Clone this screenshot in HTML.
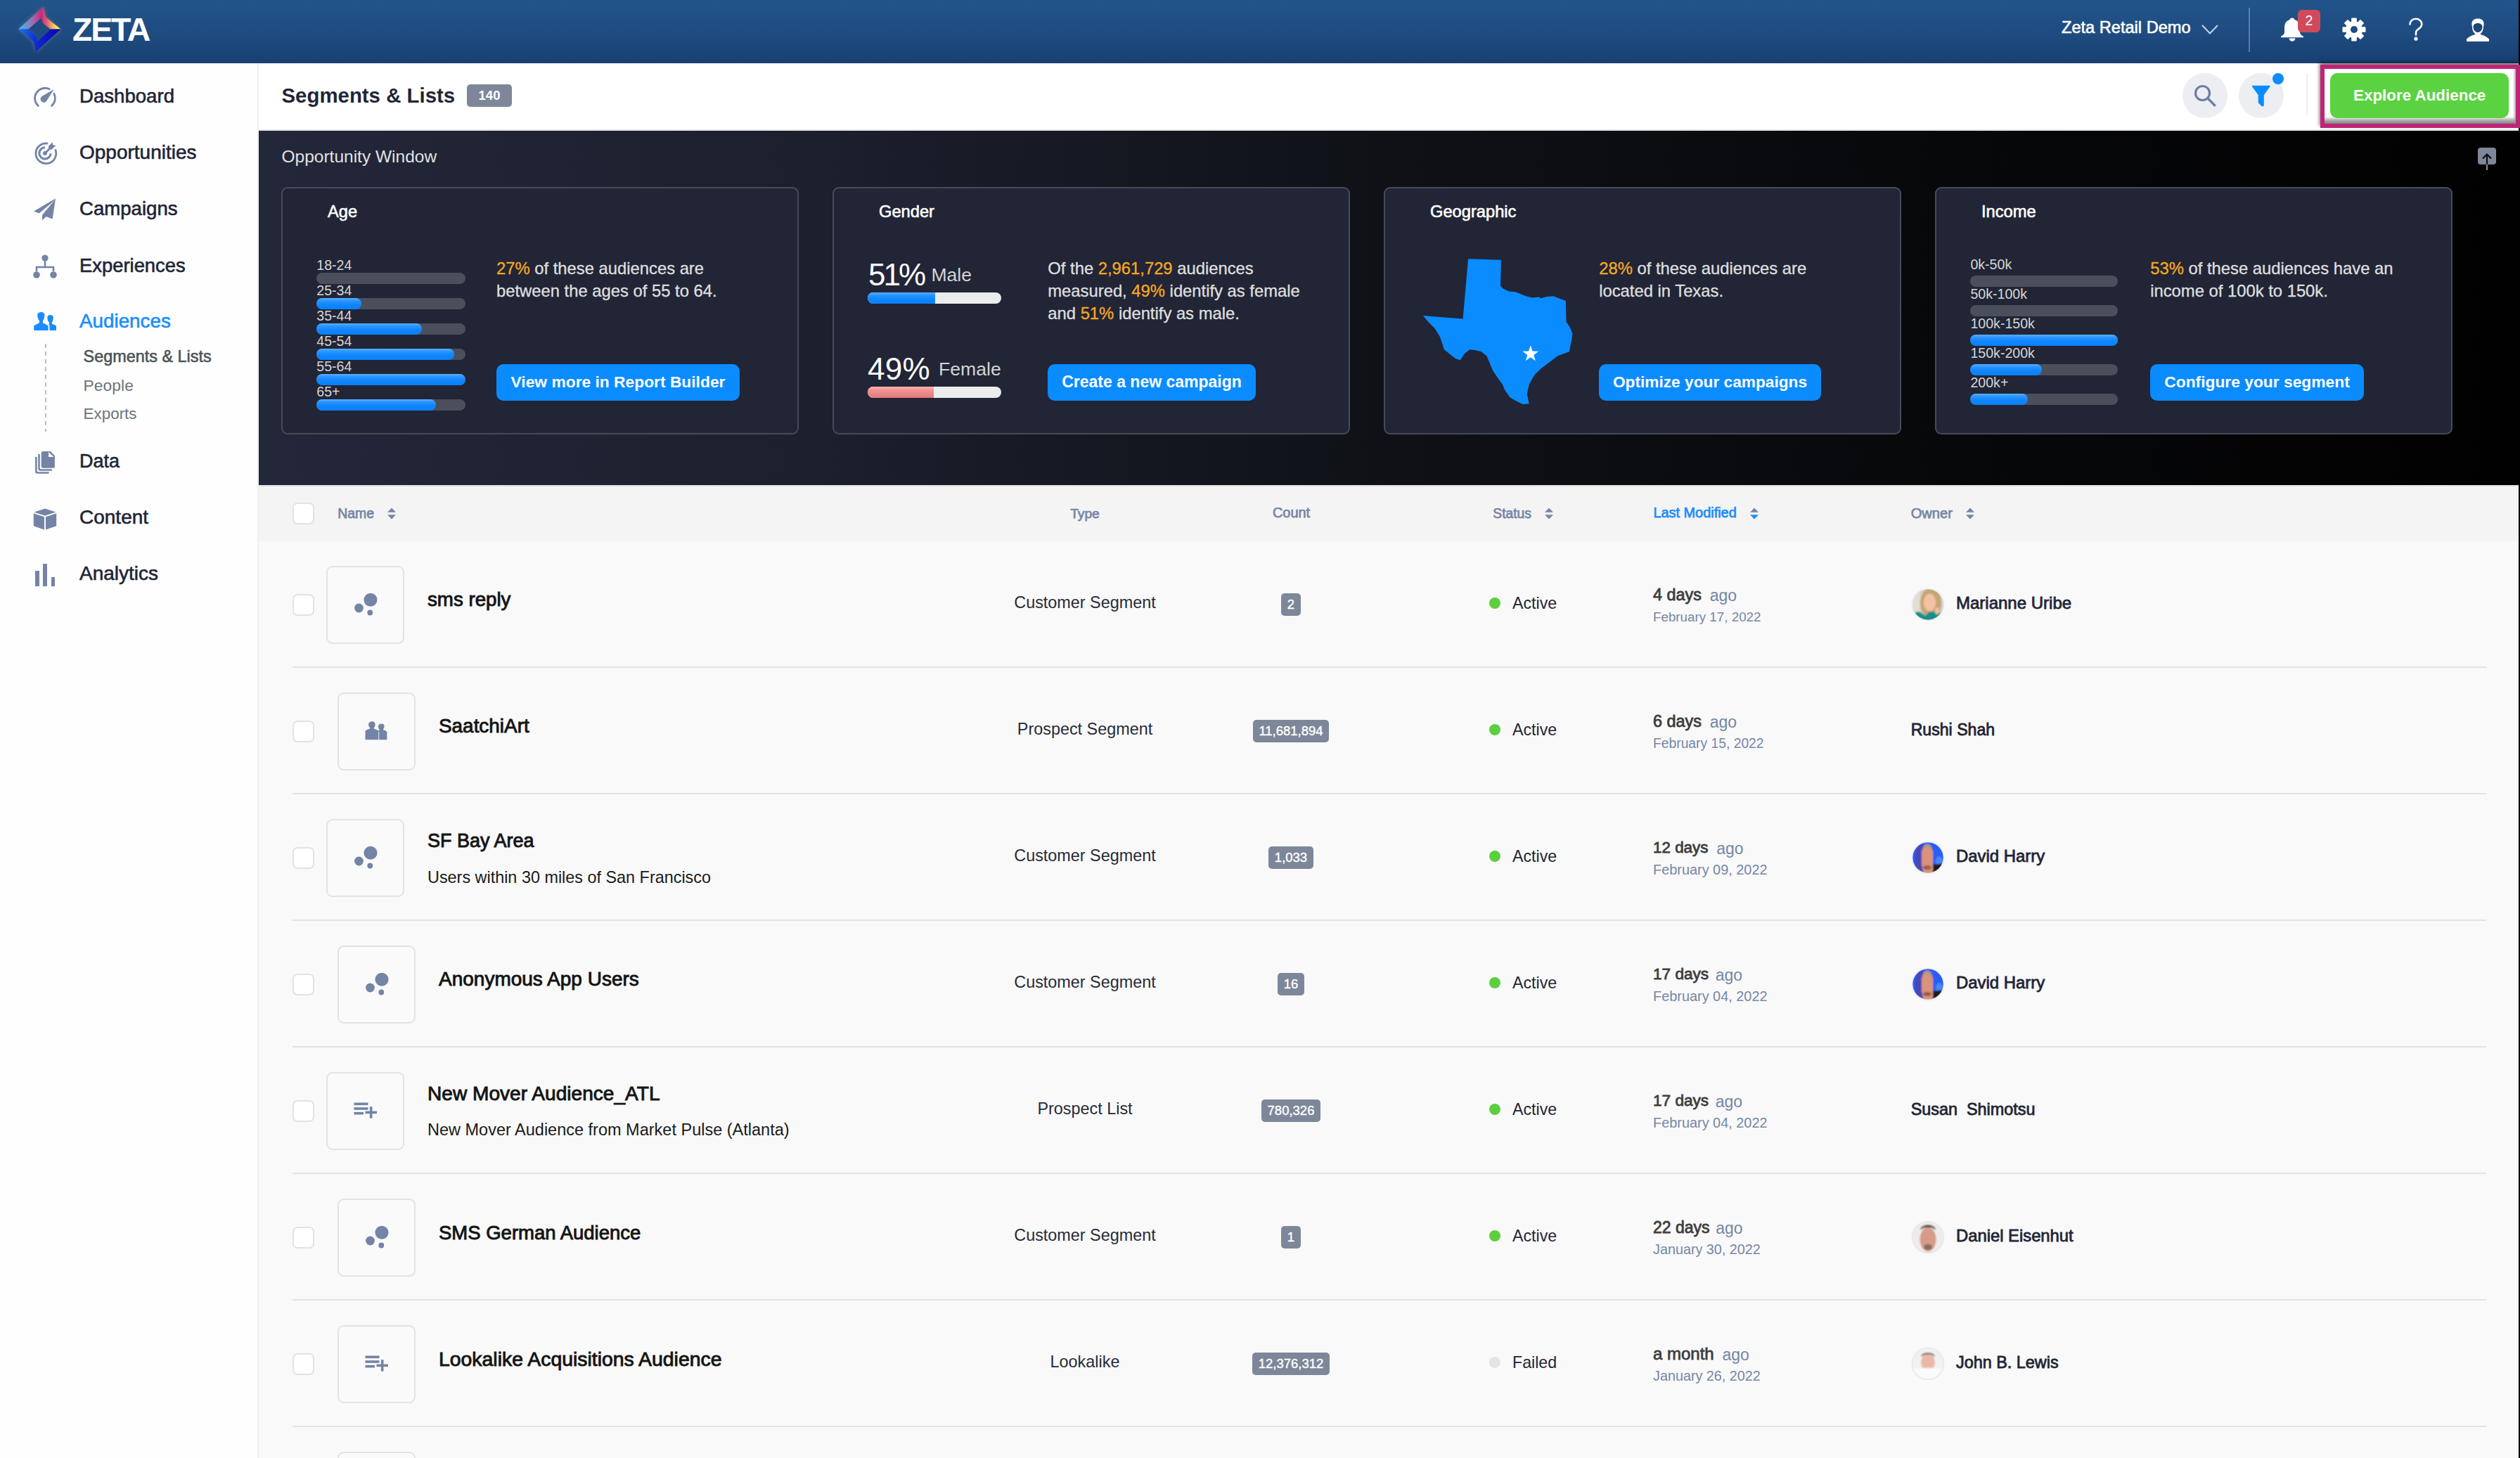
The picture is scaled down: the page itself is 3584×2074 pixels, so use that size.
<!DOCTYPE html>
<html><head><meta charset="utf-8"><title>Segments &amp; Lists</title><style>
*{margin:0;padding:0;box-sizing:border-box}
html,body{width:3584px;height:2074px;overflow:hidden;background:#f9f9f9;font-family:"Liberation Sans",sans-serif}
.a{position:absolute}
.t{position:absolute;white-space:nowrap}
svg{position:absolute;overflow:visible}
</style></head><body>
<div class="a" style="left:0px;top:0px;width:3582px;height:90px;background:linear-gradient(#22548b 0%,#1e4b80 55%,#193f71 100%);"></div>
<div class="a" style="left:3582px;top:0px;width:2px;height:2074px;background:#000;"></div>
<svg style="left:0;top:0" width="100" height="90" viewBox="0 0 100 90">
<defs>
<linearGradient id="lgT" x1="26" y1="0" x2="86" y2="0" gradientUnits="userSpaceOnUse">
<stop offset="0" stop-color="#25c8ff"/><stop offset="0.33" stop-color="#9b6fb2"/><stop offset="0.55" stop-color="#cf2679"/><stop offset="0.68" stop-color="#e3606f"/><stop offset="0.92" stop-color="#fff35c"/></linearGradient>
<linearGradient id="lgB" x1="26" y1="0" x2="86" y2="0" gradientUnits="userSpaceOnUse">
<stop offset="0" stop-color="#1a78ea"/><stop offset="0.45" stop-color="#1027cc"/><stop offset="1" stop-color="#0a00b0"/></linearGradient>
<filter id="glow" x="-30%" y="-30%" width="160%" height="160%"><feGaussianBlur stdDeviation="2.5"/></filter>
</defs>
<g opacity="0.35" filter="url(#glow)"><polygon fill="#e8d890" points="26.2,41.6 61.6,9.9 65,24.5 86.4,41.6 50.9,73.7 47.8,59.3"/></g>
<polygon fill="#1f4c80" points="40.3,41.6 59.1,25.1 60.9,32.8 72,41.6 53.2,58.8 51.6,51.6"/>
<polygon fill="url(#lgT)" points="26.2,41.6 61.6,9.9 65,24.5 86.4,41.6 72,41.6 60.9,32.8 59.1,25.1 40.3,41.6"/>
<polygon fill="url(#lgB)" points="26.2,41.6 40.3,41.6 51.6,51.6 53.2,58.8 72,41.6 86.4,41.6 50.9,73.7 47.8,59.3"/>
</svg>
<div class="t" style="left:103.0px;top:19.3px;font-size:46.5px;line-height:46.5px;font-weight:700;color:#fff;letter-spacing:-2.2px;">ZETA</div>
<div class="t" style="left:2932.0px;top:28.3px;font-size:23.6px;line-height:23.6px;color:#fff;-webkit-text-stroke:0.6px;">Zeta Retail Demo</div>
<svg style="left:3130px;top:34px" width="26" height="16" viewBox="0 0 26 16"><polyline points="2,2 13,13.5 24,2" fill="none" stroke="#c9d2de" stroke-width="2"/></svg>
<div class="a" style="left:3198px;top:11px;width:2px;height:63px;background:rgba(255,255,255,0.28);"></div>
<svg style="left:3243px;top:25px" width="34" height="34" viewBox="0 0 34 34">
<path d="M17 0.5c2 0 3.2 1.2 3.4 2.6c5.6 1.4 7.6 6.2 7.6 12v6.4c0.6 2.6 2.6 4.2 5 5.2v1.6H1v-1.6c2.4-1 4.4-2.6 5-5.2v-6.4c0-5.8 2-10.6 7.6-12C13.8 1.7 15 0.5 17 0.5z" fill="#fff"/>
<path d="M12.6 29.6h8.8c0 2.6-2 4.2-4.4 4.2s-4.4-1.6-4.4-4.2z" fill="#fff"/></svg>
<div class="a" style="left:3268px;top:14px;width:32px;height:32px;background:#cf4b5c;border-radius:6px;"></div>
<div class="t" style="left:3268.0px;top:19.8px;font-size:19.5px;line-height:19.5px;color:#fff;text-align:center;width:32px;">2</div>
<svg style="left:3331px;top:25px" width="34" height="34" viewBox="-17 -17 34 34">
<g fill="#fff">
<rect x="-3.8" y="-16.5" width="7.6" height="33" rx="0.8"/>
<rect x="-3.8" y="-16.5" width="7.6" height="33" rx="0.8" transform="rotate(45)"/>
<rect x="-3.8" y="-16.5" width="7.6" height="33" rx="0.8" transform="rotate(90)"/>
<rect x="-3.8" y="-16.5" width="7.6" height="33" rx="0.8" transform="rotate(135)"/>
<circle r="12"/></g><circle r="5" fill="#1e4a7e"/></svg>
<svg style="left:3424px;top:25px" width="24" height="34" viewBox="0 0 24 34">
<path d="M3.5 9.5C3.5 5 7 1.8 11.8 1.8S20.3 5 20.3 9.2c0 4.6-3.6 6.2-6 8c-1.6 1.2-2.3 2.4-2.3 4.6v2.6" fill="none" stroke="#fff" stroke-width="2.6" stroke-linecap="round"/>
<circle cx="12" cy="30.2" r="2.6" fill="#fff"/></svg>
<svg style="left:3507px;top:25px" width="34" height="34" viewBox="0 0 34 34">
<path d="M17 1.5c5.5 0 8.6 2.6 8.6 7.6c0 1.6-0.3 2.8-0.6 3.8c0.2 4-1.8 8.4-4.4 10.2v0.8c4.6 1.2 9.8 3.4 12.4 6.6V34H1v-3.5c2.6-3.2 7.8-5.4 12.4-6.6v-0.8c-2.6-1.8-4.6-6.2-4.4-10.2c-0.3-1-0.6-2.2-0.6-3.8C8.4 4.1 11.5 1.5 17 1.5z" fill="#fff"/>
<path d="M10.5 12.5c0.8-3 2.6-4.5 6.5-4.5s5.7 1.5 6.5 4.5c0.2 3.6-1.6 8-6.5 8.6c-4.9-0.6-6.7-5-6.5-8.6z" fill="#1c477a"/>
<path d="M11.3 13.5c0.6-2.6 2.4-3.9 5.7-3.9s5.1 1.3 5.7 3.9c0 3.2-1.8 6.6-5.7 7.1c-3.9-0.5-5.7-3.9-5.7-7.1z" fill="#1c477a"/>
</svg>
<div class="a" style="left:0px;top:90px;width:366px;height:1984px;background:#fefefe;"></div>
<div class="a" style="left:366px;top:90px;width:2px;height:1984px;background:#eef0f2;"></div>
<div class="t" style="left:113.0px;top:122.6px;font-size:27.6px;line-height:27.6px;color:#1f2536;-webkit-text-stroke:0.6px #1f2536;">Dashboard</div>
<div class="t" style="left:113.0px;top:203.1px;font-size:28.0px;line-height:28.0px;color:#1f2536;-webkit-text-stroke:0.6px #1f2536;">Opportunities</div>
<div class="t" style="left:113.0px;top:283.4px;font-size:27.6px;line-height:27.6px;color:#1f2536;-webkit-text-stroke:0.6px #1f2536;">Campaigns</div>
<div class="t" style="left:113.0px;top:363.6px;font-size:27.4px;line-height:27.4px;color:#1f2536;-webkit-text-stroke:0.6px #1f2536;">Experiences</div>
<div class="t" style="left:113.0px;top:442.5px;font-size:27.8px;line-height:27.8px;color:#1a8cff;-webkit-text-stroke:0.6px #1a8cff;">Audiences</div>
<div class="t" style="left:113.0px;top:643.1px;font-size:27.0px;line-height:27.0px;color:#1f2536;-webkit-text-stroke:0.6px #1f2536;">Data</div>
<div class="t" style="left:113.0px;top:722.3px;font-size:28.0px;line-height:28.0px;color:#1f2536;-webkit-text-stroke:0.6px #1f2536;">Content</div>
<div class="t" style="left:113.0px;top:802.3px;font-size:28.0px;line-height:28.0px;color:#1f2536;-webkit-text-stroke:0.6px #1f2536;">Analytics</div>
<svg style="left:40px;top:115px" width="50" height="50" viewBox="0 0 50 50">
<path d="M14.36 35.4A14.4 14.4 0 0 1 30.18 11.69" fill="none" stroke="#7384a6" stroke-width="2.8" stroke-linecap="round"/>
<path d="M36.84 18.19A14.4 14.4 0 0 1 33.64 35.4" fill="none" stroke="#7384a6" stroke-width="2.8" stroke-linecap="round"/>
<path d="M36.7 12L26.37 28.54A4.8 4.8 0 1 1 19.87 21.86Z" fill="#7384a6"/></svg>
<svg style="left:40px;top:193px" width="50" height="50" viewBox="0 0 50 50">
<path d="M38.52 19.43A14.4 14.4 0 1 1 28.21 11.13" fill="none" stroke="#7384a6" stroke-width="2.8"/>
<path d="M32.19 25.37A8.2 8.2 0 1 1 24 16.7" fill="none" stroke="#7384a6" stroke-width="3.1"/>
<circle cx="24" cy="24.9" r="2.9" fill="#7384a6"/>
<path d="M24 24.9L31.5 17.4" stroke="#7384a6" stroke-width="2.8"/>
<path d="M29 15.1L34.6 9.3L35.3 13.2L39.4 13.9L33.4 19.7L30.2 20.1L29.1 17.1Z" fill="#7384a6"/></svg>
<svg style="left:40px;top:275px" width="50" height="50" viewBox="0 0 50 50">
<path d="M39.1 7.2L8.1 25.4L15.6 28.6L34.2 13.1Z" fill="#7384a6"/>
<path d="M39.1 7.2L34.8 13.3L19.9 30.9L20.2 38.6L25.5 32.9L34.6 36.5Z" fill="#7384a6"/></svg>
<svg style="left:47px;top:362px" width="34" height="34" viewBox="0 0 34 34">
<circle cx="17" cy="5" r="4.6" fill="#7384a6"/><circle cx="5" cy="29" r="4.8" fill="#7384a6"/><circle cx="29" cy="29" r="4.8" fill="#7384a6"/>
<path d="M17 9v9M5 24v-6h24v6" fill="none" stroke="#7384a6" stroke-width="2.6"/></svg>
<svg style="left:40px;top:432px" width="50" height="50" viewBox="0 0 50 50">
<path d="M8.2 31.2L15.5 27.6Q16 27.4 16 26.5L16 24.2C14.6 23 13.8 21 13.6 19L13.2 16.5C13 13.5 15.5 12 18.5 12C21.5 12 23.6 13.5 23.4 16.5L23 19C22.8 21 22 23 20.9 24.2L20.9 26.5Q20.9 27.4 21.4 27.6L28.6 31.2V37.9H8.2Z" fill="#1a8cff"/>
<path d="M30.5 31.2Q30.5 30 28.6 29.4L30.3 29.1Q30 28.6 30 28V26.6C28.6 25.6 27.8 24 27.6 22.2L27.3 20C27.2 17.6 29 16.1 31.6 16.1C34.2 16.1 35.9 17.6 35.8 20L35.5 22.2C35.3 24 34.8 25.6 34 26.6V28Q34 28.8 34.6 29L40 31.2V37.9H30.5Z" fill="#1a8cff"/></svg>
<svg style="left:40px;top:630px" width="50" height="50" viewBox="0 0 50 50">
<path d="M21.2 12H31.7L37.9 18.2V33.2A2.5 2.5 0 0 1 35.4 35.7H21.2A2.5 2.5 0 0 1 18.7 33.2V14.5A2.5 2.5 0 0 1 21.2 12Z" fill="#7384a6"/>
<path d="M29 13V20H36.4Z" fill="#fefefe"/>
<path d="M15.5 16.1V36.5A2 2 0 0 0 17.5 38.5H33.8" fill="none" stroke="#7384a6" stroke-width="2.6"/>
<path d="M11.4 20V40.5A2 2 0 0 0 13.4 42.5H29.5" fill="none" stroke="#7384a6" stroke-width="2.6"/></svg>
<svg style="left:47px;top:723px" width="34" height="32" viewBox="0 0 34 32">
<path d="M17 0.5L32.5 5.5 17 10.5 1.5 5.5z" fill="#7384a6"/>
<path d="M0.8 7.2L16 12.2V30.5L0.8 25.2z" fill="#7384a6"/>
<path d="M33.2 7.2L18 12.2V30.5L33.2 25.2z" fill="#7384a6"/></svg>
<div class="a" style="left:50px;top:812px;width:5.5px;height:21.5px;background:#7384a6;"></div>
<div class="a" style="left:61px;top:802px;width:5.5px;height:31.5px;background:#7384a6;"></div>
<div class="a" style="left:72.5px;top:821px;width:5.5px;height:12.5px;background:#7384a6;"></div>
<div class="t" style="left:118.6px;top:496.2px;font-size:23.4px;line-height:23.4px;color:#4a5458;-webkit-text-stroke:0.6px;">Segments &amp; Lists</div>
<div class="t" style="left:118.6px;top:537.3px;font-size:22.9px;line-height:22.9px;color:#6c7479;">People</div>
<div class="t" style="left:118.6px;top:577.5px;font-size:22.4px;line-height:22.4px;color:#6c7479;">Exports</div>
<svg style="left:63px;top:489px" width="4" height="125" viewBox="0 0 4 125"><line x1="2" y1="0" x2="2" y2="125" stroke="#b5bdcb" stroke-width="2" stroke-dasharray="6 5"/></svg>
<div class="a" style="left:368px;top:90px;width:3214px;height:96px;background:#fff;"></div>
<div class="a" style="left:368px;top:184px;width:3214px;height:2px;background:#e6e7e9;"></div>
<div class="t" style="left:400.5px;top:121.4px;font-size:29.4px;line-height:29.4px;font-weight:700;color:#1f2637;">Segments &amp; Lists</div>
<div class="a" style="left:664px;top:120px;width:64px;height:32px;background:#7d8799;border-radius:5px;"></div>
<div class="t" style="left:664.0px;top:127.3px;font-size:18.6px;line-height:18.6px;font-weight:700;color:#fff;text-align:center;width:64px;">140</div>
<div class="a" style="left:3104px;top:104px;width:64px;height:64px;background:#edeef1;border-radius:50%;"></div>
<svg style="left:3118px;top:118px" width="36" height="36" viewBox="0 0 36 36">
<circle cx="14.5" cy="14.5" r="10" fill="none" stroke="#6e7fa3" stroke-width="3.2"/>
<line x1="22" y1="22" x2="31.5" y2="31.5" stroke="#6e7fa3" stroke-width="3.4" stroke-linecap="square"/></svg>
<div class="a" style="left:3184px;top:104px;width:64px;height:64px;background:#edeef1;border-radius:50%;"></div>
<svg style="left:3202px;top:120px" width="28" height="32" viewBox="0 0 28 32">
<path d="M1.5 2.5h24.5L17 15v14.5c0 1.2-1.4 1.6-2.2 0.8L10.5 26V15z" fill="#0a8cff" stroke="#0a8cff" stroke-width="1.5" stroke-linejoin="round"/></svg>
<div class="a" style="left:3232px;top:104px;width:16px;height:16px;background:#0a8cff;border-radius:50%;"></div>
<div class="a" style="left:3280px;top:104px;width:2px;height:60px;background:#eceef2;"></div>
<div class="a" style="left:3300px;top:92px;width:284px;height:90px;box-shadow:-1px -3px 5px rgba(0,0,0,0.55);"></div>
<div class="a" style="left:3300px;top:92px;width:284px;height:90px;background:#fff;border:6px solid #bf2577;"></div>
<div class="a" style="left:3306px;top:166px;width:272px;height:10px;background:linear-gradient(rgba(125,125,125,0) 0%,rgba(125,125,125,0.55) 45%,rgba(125,125,125,1) 100%);"></div>
<div class="a" style="left:3574px;top:98px;width:4px;height:78px;background:linear-gradient(90deg,rgba(150,150,150,0),rgba(150,150,150,0.8));"></div>
<div class="a" style="left:3314px;top:104px;width:254px;height:64px;background:#5bd242;border-radius:10px;"></div>
<div class="t" style="left:3347.0px;top:125.0px;font-size:22.4px;line-height:22.4px;font-weight:700;color:#fff;">Explore Audience</div>
<div class="a" style="left:368px;top:186px;width:3214px;height:504px;background:linear-gradient(90deg,#23273a 0%,#1c1f2c 25%,#0f1117 50%,#07080a 75%,#010101 100%);"></div>
<div class="t" style="left:400.5px;top:211.3px;font-size:24.5px;line-height:24.5px;color:#e2e2e2;">Opportunity Window</div>
<div class="a" style="left:3524px;top:210px;width:26px;height:24px;background:#7d8799;border-radius:4px;"></div>
<svg style="left:3524px;top:210px" width="26" height="34" viewBox="0 0 26 34">
<path d="M13 24V10M7 15.5L13 9.5l6 6" fill="none" stroke="#0b0c10" stroke-width="2.2"/><path d="M13 24v8" stroke="#7d8799" stroke-width="2.4"/></svg>
<div class="a" style="left:400px;top:266px;width:736px;height:352px;background:#212536;border:2px solid #474b58;border-radius:9px;"></div>
<div class="t" style="left:466.0px;top:290.2px;font-size:23.7px;line-height:23.7px;color:#fff;-webkit-text-stroke:0.6px;">Age</div>
<div class="a" style="left:1184px;top:266px;width:736px;height:352px;background:#212536;border:2px solid #474b58;border-radius:9px;"></div>
<div class="t" style="left:1250.0px;top:290.2px;font-size:23.7px;line-height:23.7px;color:#fff;-webkit-text-stroke:0.6px;">Gender</div>
<div class="a" style="left:1968px;top:266px;width:736px;height:352px;background:#212536;border:2px solid #474b58;border-radius:9px;"></div>
<div class="t" style="left:2034.0px;top:290.2px;font-size:23.7px;line-height:23.7px;color:#fff;-webkit-text-stroke:0.6px;">Geographic</div>
<div class="a" style="left:2752px;top:266px;width:736px;height:352px;background:#212536;border:2px solid #474b58;border-radius:9px;"></div>
<div class="t" style="left:2818.0px;top:290.2px;font-size:23.7px;line-height:23.7px;color:#fff;-webkit-text-stroke:0.6px;">Income</div>
<div class="t" style="left:450.3px;top:367.9px;font-size:19.6px;line-height:19.6px;color:#d6d6d6;">18-24</div>
<div class="a" style="left:450.3px;top:388.0px;width:212px;height:16px;background:#4b4e5b;border-radius:8px;"></div>
<div class="t" style="left:450.3px;top:403.9px;font-size:19.6px;line-height:19.6px;color:#d6d6d6;">25-34</div>
<div class="a" style="left:450.3px;top:424.0px;width:212px;height:16px;background:#4b4e5b;border-radius:8px;"></div>
<div class="a" style="left:450.3px;top:424.0px;width:63.6px;height:16px;background:linear-gradient(#5ab0ff 0%,#2a94ff 25%,#0e86ff 60%,#0a80f5 100%);border-radius:8px;"></div>
<div class="t" style="left:450.3px;top:439.9px;font-size:19.6px;line-height:19.6px;color:#d6d6d6;">35-44</div>
<div class="a" style="left:450.3px;top:460.0px;width:212px;height:16px;background:#4b4e5b;border-radius:8px;"></div>
<div class="a" style="left:450.3px;top:460.0px;width:150px;height:16px;background:linear-gradient(#5ab0ff 0%,#2a94ff 25%,#0e86ff 60%,#0a80f5 100%);border-radius:8px;"></div>
<div class="t" style="left:450.3px;top:475.9px;font-size:19.6px;line-height:19.6px;color:#d6d6d6;">45-54</div>
<div class="a" style="left:450.3px;top:496.0px;width:212px;height:16px;background:#4b4e5b;border-radius:8px;"></div>
<div class="a" style="left:450.3px;top:496.0px;width:195.7px;height:16px;background:linear-gradient(#5ab0ff 0%,#2a94ff 25%,#0e86ff 60%,#0a80f5 100%);border-radius:8px;"></div>
<div class="t" style="left:450.3px;top:511.9px;font-size:19.6px;line-height:19.6px;color:#d6d6d6;">55-64</div>
<div class="a" style="left:450.3px;top:532.0px;width:212px;height:16px;background:#4b4e5b;border-radius:8px;"></div>
<div class="a" style="left:450.3px;top:532.0px;width:212px;height:16px;background:linear-gradient(#5ab0ff 0%,#2a94ff 25%,#0e86ff 60%,#0a80f5 100%);border-radius:8px;"></div>
<div class="t" style="left:450.3px;top:547.9px;font-size:19.6px;line-height:19.6px;color:#d6d6d6;">65+</div>
<div class="a" style="left:450.3px;top:568.0px;width:212px;height:16px;background:#4b4e5b;border-radius:8px;"></div>
<div class="a" style="left:450.3px;top:568.0px;width:169.8px;height:16px;background:linear-gradient(#5ab0ff 0%,#2a94ff 25%,#0e86ff 60%,#0a80f5 100%);border-radius:8px;"></div>
<div class="t" style="left:706.0px;top:370.0px;font-size:23.8px;line-height:23.8px;color:#dedede;-webkit-text-stroke:0.35px;"><span style="color:#f5a623">27%</span> of these audiences are</div>
<div class="t" style="left:706.0px;top:402.2px;font-size:23.8px;line-height:23.8px;color:#dedede;-webkit-text-stroke:0.35px;">between the ages of 55 to 64.</div>
<div class="a" style="left:706px;top:518px;width:346px;height:52px;background:#0a8cff;border-radius:10px;"></div>
<div class="t" style="left:706.0px;top:532.2px;font-size:22.8px;line-height:22.8px;font-weight:700;color:#fff;text-align:center;width:346px;">View more in Report Builder</div>
<div class="t" style="left:1235.0px;top:368.9px;font-size:44px;line-height:44px;color:#fff;letter-spacing:-3px;">51%</div>
<div class="t" style="left:1324.4px;top:377.7px;font-size:26.6px;line-height:26.6px;color:#d4d4d4;">Male</div>
<div class="a" style="left:1234px;top:416px;width:190px;height:16px;background:#ebedec;border-radius:8px;"></div>
<div class="a" style="left:1234px;top:416px;width:96px;height:16px;background:linear-gradient(#5ab0ff 0%,#2a94ff 25%,#0e86ff 60%,#0a80f5 100%);border-radius:8px 0 0 8px;"></div>
<div class="t" style="left:1234.0px;top:502.7px;font-size:44px;line-height:44px;color:#fff;letter-spacing:0.3px;">49%</div>
<div class="t" style="left:1335.0px;top:511.5px;font-size:26.6px;line-height:26.6px;color:#d4d4d4;">Female</div>
<div class="a" style="left:1234px;top:550px;width:190px;height:16px;background:#ebedec;border-radius:8px;"></div>
<div class="a" style="left:1234px;top:550px;width:94px;height:16px;background:linear-gradient(#ffb0b0 0%,#f08e8e 40%,#e27a7a 100%);border-radius:8px 0 0 8px;"></div>
<div class="t" style="left:1490.3px;top:370.0px;font-size:23.8px;line-height:23.8px;color:#dedede;-webkit-text-stroke:0.35px;">Of the <span style="color:#f5a623">2,961,729</span> audiences</div>
<div class="t" style="left:1490.3px;top:402.2px;font-size:23.8px;line-height:23.8px;color:#dedede;-webkit-text-stroke:0.35px;">measured, <span style="color:#f5a623">49%</span> identify as female</div>
<div class="t" style="left:1490.3px;top:434.4px;font-size:23.8px;line-height:23.8px;color:#dedede;-webkit-text-stroke:0.35px;">and <span style="color:#f5a623">51%</span> identify as male.</div>
<div class="a" style="left:1490px;top:518px;width:296px;height:52px;background:#0a8cff;border-radius:10px;"></div>
<div class="t" style="left:1490.0px;top:532.0px;font-size:23.0px;line-height:23.0px;font-weight:700;color:#fff;text-align:center;width:296px;">Create a new campaign</div>
<svg style="left:0;top:0" width="3584" height="700" viewBox="0 0 3584 700"><polygon fill="#0a8cff" points="2088.1,368.2 2134.9,369.7 2134.0,406.8 2137.6,410.4 2146.0,414.4 2155.1,415.3 2161.1,417.4 2170.2,421.3 2179.2,423.4 2188.3,422.5 2191.3,424.3 2200.3,421.9 2209.4,421.3 2216.9,424.3 2226.9,427.9 2227.5,458.1 2232.0,464.1 2236.5,474.7 2235.0,485.2 2233.5,491.3 2232.0,500.3 2215.4,506.3 2203.3,515.4 2191.3,524.4 2182.2,533.5 2174.7,547.1 2171.7,560.6 2174.7,574.2 2165.6,575.1 2155.1,569.7 2147.5,565.2 2140.0,554.6 2137.0,547.1 2129.4,536.5 2123.4,527.5 2118.3,515.4 2114.4,506.3 2106.8,500.3 2097.8,497.9 2090.2,497.3 2082.7,503.3 2076.7,512.4 2069.1,509.4 2054.0,497.3 2051.0,488.3 2048.0,479.2 2040.5,467.1 2031.4,458.1 2023.9,449.0 2080.6,453.6"/><polygon fill="#fff" transform="translate(2176.8,503.5)" points="0,-12 2.8,-3.9 11.4,-3.7 4.5,1.5 7,9.7 0,4.8 -7,9.7 -4.5,1.5 -11.4,-3.7 -2.8,-3.9"/></svg>
<div class="t" style="left:2274.2px;top:370.0px;font-size:23.8px;line-height:23.8px;color:#dedede;-webkit-text-stroke:0.35px;"><span style="color:#f5a623">28%</span> of these audiences are</div>
<div class="t" style="left:2274.2px;top:402.2px;font-size:23.8px;line-height:23.8px;color:#dedede;-webkit-text-stroke:0.35px;">located in Texas.</div>
<div class="a" style="left:2274px;top:518px;width:316px;height:52px;background:#0a8cff;border-radius:10px;"></div>
<div class="t" style="left:2274.0px;top:532.3px;font-size:22.7px;line-height:22.7px;font-weight:700;color:#fff;text-align:center;width:316px;">Optimize your campaigns</div>
<div class="t" style="left:2802.4px;top:367.4px;font-size:19.6px;line-height:19.6px;color:#d6d6d6;">0k-50k</div>
<div class="a" style="left:2802.4px;top:392px;width:210px;height:16px;background:#4b4e5b;border-radius:8px;"></div>
<div class="t" style="left:2802.4px;top:409.4px;font-size:19.6px;line-height:19.6px;color:#d6d6d6;">50k-100k</div>
<div class="a" style="left:2802.4px;top:434px;width:210px;height:16px;background:#4b4e5b;border-radius:8px;"></div>
<div class="t" style="left:2802.4px;top:451.4px;font-size:19.6px;line-height:19.6px;color:#d6d6d6;">100k-150k</div>
<div class="a" style="left:2802.4px;top:476px;width:210px;height:16px;background:#4b4e5b;border-radius:8px;"></div>
<div class="a" style="left:2802.4px;top:476px;width:210px;height:16px;background:linear-gradient(#5ab0ff 0%,#2a94ff 25%,#0e86ff 60%,#0a80f5 100%);border-radius:8px;"></div>
<div class="t" style="left:2802.4px;top:493.4px;font-size:19.6px;line-height:19.6px;color:#d6d6d6;">150k-200k</div>
<div class="a" style="left:2802.4px;top:518px;width:210px;height:16px;background:#4b4e5b;border-radius:8px;"></div>
<div class="a" style="left:2802.4px;top:518px;width:101.5px;height:16px;background:linear-gradient(#5ab0ff 0%,#2a94ff 25%,#0e86ff 60%,#0a80f5 100%);border-radius:8px;"></div>
<div class="t" style="left:2802.4px;top:535.4px;font-size:19.6px;line-height:19.6px;color:#d6d6d6;">200k+</div>
<div class="a" style="left:2802.4px;top:560px;width:210px;height:16px;background:#4b4e5b;border-radius:8px;"></div>
<div class="a" style="left:2802.4px;top:560px;width:81.6px;height:16px;background:linear-gradient(#5ab0ff 0%,#2a94ff 25%,#0e86ff 60%,#0a80f5 100%);border-radius:8px;"></div>
<div class="t" style="left:3058.2px;top:370.3px;font-size:23.8px;line-height:23.8px;color:#dedede;-webkit-text-stroke:0.35px;"><span style="color:#f5a623">53%</span> of these audiences have an</div>
<div class="t" style="left:3058.2px;top:401.8px;font-size:23.8px;line-height:23.8px;color:#dedede;-webkit-text-stroke:0.35px;">income of 100k to 150k.</div>
<div class="a" style="left:3058px;top:518px;width:304px;height:52px;background:#0a8cff;border-radius:10px;"></div>
<div class="t" style="left:3058.0px;top:532.2px;font-size:22.8px;line-height:22.8px;font-weight:700;color:#fff;text-align:center;width:304px;">Configure your segment</div>
<div class="a" style="left:368px;top:690px;width:3214px;height:2px;background:#e2e2e2;"></div>
<div class="a" style="left:368px;top:692px;width:3214px;height:78px;background:#f4f4f4;"></div>
<div class="a" style="left:416px;top:714.5px;width:31px;height:31px;background:#fff;border:2px solid #e2e2e2;border-radius:7px;"></div>
<div class="t" style="left:480.3px;top:720.6px;font-size:19.4px;line-height:19.4px;color:#7586a6;-webkit-text-stroke:0.75px;">Name</div>
<svg style="left:549.5px;top:721.5px" width="14" height="17" viewBox="0 0 14 17"><path d="M7 0.5L13 6.8H1z" fill="#7586a6"/><path d="M7 16.5L13 10.2H1z" fill="#7586a6"/></svg>
<div class="t" style="left:1343.0px;top:720.7px;font-size:19.2px;line-height:19.2px;color:#7586a6;text-align:center;width:400px;-webkit-text-stroke:0.75px;">Type</div>
<div class="t" style="left:1636.5px;top:720.2px;font-size:19.9px;line-height:19.9px;color:#7586a6;text-align:center;width:400px;-webkit-text-stroke:0.75px;">Count</div>
<div class="t" style="left:2123.3px;top:720.7px;font-size:19.3px;line-height:19.3px;color:#7586a6;-webkit-text-stroke:0.75px;">Status</div>
<svg style="left:2195.5px;top:721.5px" width="14" height="17" viewBox="0 0 14 17"><path d="M7 0.5L13 6.8H1z" fill="#7586a6"/><path d="M7 16.5L13 10.2H1z" fill="#7586a6"/></svg>
<div class="t" style="left:2351.4px;top:720.2px;font-size:19.9px;line-height:19.9px;color:#1a8cff;-webkit-text-stroke:0.75px;">Last Modified</div>
<svg style="left:2487.5px;top:721.5px" width="14" height="17" viewBox="0 0 14 17"><path d="M7 0.5L13 6.8H1z" fill="#7586a6"/><path d="M7 16.5L13 10.2H1z" fill="#1a8cff"/></svg>
<div class="t" style="left:2717.7px;top:720.0px;font-size:20.1px;line-height:20.1px;color:#7586a6;-webkit-text-stroke:0.75px;">Owner</div>
<svg style="left:2795px;top:721.5px" width="14" height="17" viewBox="0 0 14 17"><path d="M7 0.5L13 6.8H1z" fill="#7586a6"/><path d="M7 16.5L13 10.2H1z" fill="#7586a6"/></svg>
<div class="a" style="left:416px;top:948px;width:3120px;height:2px;background:#e3e3e3;"></div>
<div class="a" style="left:416px;top:844.5px;width:31px;height:31px;background:#fff;border:2px solid #e2e2e2;border-radius:7px;"></div>
<div class="a" style="left:464px;top:804.5px;width:111px;height:111px;background:#fafafa;border:2px solid #e3e3e3;border-radius:9px;"></div>
<svg style="left:489.5px;top:830px" width="60" height="60" viewBox="0 0 60 60"><circle cx="37.0" cy="23.3" r="9.5" fill="#7384a6"/><circle cx="20.5" cy="35.0" r="6.4" fill="#7384a6"/><circle cx="36.3" cy="41.5" r="3.9" fill="#7384a6"/></svg>
<div class="t" style="left:608.0px;top:839.3px;font-size:27.7px;line-height:27.7px;color:#141414;-webkit-text-stroke:0.9px;">sms reply</div>
<div class="t" style="left:1343.0px;top:846.4px;font-size:23.4px;line-height:23.4px;color:#262b38;text-align:center;width:400px;">Customer Segment</div>
<div class="t" style="left:1636px;top:844px;width:400px;text-align:center;line-height:0"><span style="display:inline-block;background:#7d8799;color:#fff;border-radius:5px;font-size:18.5px;line-height:32px;height:32px;padding:0 8.5px;-webkit-text-stroke:0.4px #fff;">2</span></div>
<div class="a" style="left:2118px;top:850px;width:16px;height:16px;background:#5ccf3f;border-radius:50%;"></div>
<div class="t" style="left:2151.0px;top:846.6px;font-size:23.2px;line-height:23.2px;color:#1f2536;">Active</div>
<div class="t" style="left:2351.0px;top:834.5px;font-size:23.4px;line-height:23.4px;color:#3d3d3d;-webkit-text-stroke:0.8px;">4 days</div>
<div class="t" style="left:2351px;top:835.7px;font-size:22px;line-height:22px;visibility:hidden">4 days</div>
<div class="t" style="left:2431.7px;top:836.0px;font-size:23.0px;line-height:23.0px;color:#7586a6;">ago</div>
<div class="t" style="left:2351.0px;top:868.6px;font-size:18.8px;line-height:18.8px;color:#7586a6;">February 17, 2022</div>
<svg style="left:2718px;top:836px" width="48" height="48" viewBox="0 0 48 48">
<defs><clipPath id="cp_marianne_860"><circle cx="24" cy="24" r="22"/></clipPath><filter id="bl_marianne_860"><feGaussianBlur stdDeviation="0.9"/></filter></defs>
<g clip-path="url(#cp_marianne_860)"><g filter="url(#bl_marianne_860)"><rect width="48" height="48" fill="#d8d4cb"/><rect x="0" y="0" width="12" height="48" fill="#e2dfd2"/>
<ellipse cx="28" cy="22" rx="15" ry="22" fill="#c6a473"/>
<ellipse cx="26.5" cy="21" rx="8.8" ry="12.5" fill="#f1c3a2"/>
<path d="M0 36L12 34L20 40L26 34L34 34L44 36L48 48H0z" fill="#12908a"/>
<ellipse cx="37" cy="33" rx="3.2" ry="5" fill="#f0c0a0"/></g></g>
<circle cx="24" cy="24" r="22.5" fill="none" stroke="#e6e9ee" stroke-width="1.6"/></svg>
<div class="t" style="left:2782.0px;top:846.2px;font-size:24.0px;line-height:24.0px;color:#1f2536;-webkit-text-stroke:0.8px;">Marianne Uribe</div>
<div class="a" style="left:416px;top:1128px;width:3120px;height:2px;background:#e3e3e3;"></div>
<div class="a" style="left:416px;top:1024.5px;width:31px;height:31px;background:#fff;border:2px solid #e2e2e2;border-radius:7px;"></div>
<div class="a" style="left:480px;top:984.5px;width:111px;height:111px;background:#fafafa;border:2px solid #e3e3e3;border-radius:9px;"></div>
<svg style="left:519.0px;top:1024px" width="40" height="32" viewBox="0 0 40 32">
<path d="M10.5 2.3c2.6 0 4.2 1.6 4.2 4.2c0 2-0.8 3.6-1.8 4.4v1.8c2.8 0.6 5.2 1.6 6.4 3.4v12.2H0.5V16.1c1.2-1.8 3.6-2.8 6.4-3.4v-1.8c-1-0.8-1.8-2.4-1.8-4.4C5.1 3.9 7.3 2.3 10.5 2.3z" fill="#7384a6"/>
<path d="M24 5.4c2.2 0 3.6 1.4 3.6 3.6c0 1.8-0.7 3.2-1.5 3.8v1.5c2.4 0.5 4.4 1.4 5.3 2.9v11.1H20.2V17.5c-0.6-0.8-1.4-1.4-2.4-1.9c0.8-0.4 1.8-0.6 2.6-0.8v-1.5c-0.8-0.6-1.5-2-1.5-3.8c0-2.2 1.6-4.1 5.1-4.1z" fill="#7384a6"/></svg>
<div class="t" style="left:624.0px;top:1019.2px;font-size:27.9px;line-height:27.9px;color:#141414;-webkit-text-stroke:0.9px;">SaatchiArt</div>
<div class="t" style="left:1343.0px;top:1026.4px;font-size:23.4px;line-height:23.4px;color:#262b38;text-align:center;width:400px;">Prospect Segment</div>
<div class="t" style="left:1636px;top:1024px;width:400px;text-align:center;line-height:0"><span style="display:inline-block;background:#7d8799;color:#fff;border-radius:5px;font-size:18.5px;line-height:32px;height:32px;padding:0 8.5px;-webkit-text-stroke:0.4px #fff;">11,681,894</span></div>
<div class="a" style="left:2118px;top:1030px;width:16px;height:16px;background:#5ccf3f;border-radius:50%;"></div>
<div class="t" style="left:2151.0px;top:1026.6px;font-size:23.2px;line-height:23.2px;color:#1f2536;">Active</div>
<div class="t" style="left:2351.0px;top:1014.5px;font-size:23.4px;line-height:23.4px;color:#3d3d3d;-webkit-text-stroke:0.8px;">6 days</div>
<div class="t" style="left:2351px;top:1015.7px;font-size:22px;line-height:22px;visibility:hidden">6 days</div>
<div class="t" style="left:2431.7px;top:1016.0px;font-size:23.0px;line-height:23.0px;color:#7586a6;">ago</div>
<div class="t" style="left:2351.0px;top:1048.2px;font-size:19.3px;line-height:19.3px;color:#7586a6;">February 15, 2022</div>
<div class="t" style="left:2717.7px;top:1026.9px;font-size:23.1px;line-height:23.1px;color:#1f2536;-webkit-text-stroke:0.8px;">Rushi Shah</div>
<div class="a" style="left:416px;top:1308px;width:3120px;height:2px;background:#e3e3e3;"></div>
<div class="a" style="left:416px;top:1204.5px;width:31px;height:31px;background:#fff;border:2px solid #e2e2e2;border-radius:7px;"></div>
<div class="a" style="left:464px;top:1164.5px;width:111px;height:111px;background:#fafafa;border:2px solid #e3e3e3;border-radius:9px;"></div>
<svg style="left:489.5px;top:1190px" width="60" height="60" viewBox="0 0 60 60"><circle cx="37.0" cy="23.3" r="9.5" fill="#7384a6"/><circle cx="20.5" cy="35.0" r="6.4" fill="#7384a6"/><circle cx="36.3" cy="41.5" r="3.9" fill="#7384a6"/></svg>
<div class="t" style="left:608.0px;top:1182.9px;font-size:27.0px;line-height:27.0px;color:#141414;-webkit-text-stroke:0.9px;">SF Bay Area</div>
<div class="t" style="left:608.0px;top:1236.5px;font-size:23.4px;line-height:23.4px;color:#1a1a1a;">Users within 30 miles of San Francisco</div>
<div class="t" style="left:1343.0px;top:1206.4px;font-size:23.4px;line-height:23.4px;color:#262b38;text-align:center;width:400px;">Customer Segment</div>
<div class="t" style="left:1636px;top:1204px;width:400px;text-align:center;line-height:0"><span style="display:inline-block;background:#7d8799;color:#fff;border-radius:5px;font-size:18.5px;line-height:32px;height:32px;padding:0 8.5px;-webkit-text-stroke:0.4px #fff;">1,033</span></div>
<div class="a" style="left:2118px;top:1210px;width:16px;height:16px;background:#5ccf3f;border-radius:50%;"></div>
<div class="t" style="left:2151.0px;top:1206.6px;font-size:23.2px;line-height:23.2px;color:#1f2536;">Active</div>
<div class="t" style="left:2351.0px;top:1195.3px;font-size:22.4px;line-height:22.4px;color:#3d3d3d;-webkit-text-stroke:0.8px;">12 days</div>
<div class="t" style="left:2351px;top:1195.7px;font-size:22px;line-height:22px;visibility:hidden">12 days</div>
<div class="t" style="left:2441.2px;top:1196.0px;font-size:23.0px;line-height:23.0px;color:#7586a6;">ago</div>
<div class="t" style="left:2351.0px;top:1227.7px;font-size:19.9px;line-height:19.9px;color:#7586a6;">February 09, 2022</div>
<svg style="left:2718px;top:1196px" width="48" height="48" viewBox="0 0 48 48">
<defs><clipPath id="cp_david_1220"><circle cx="24" cy="24" r="22"/></clipPath><filter id="bl_david_1220"><feGaussianBlur stdDeviation="0.9"/></filter></defs>
<g clip-path="url(#cp_david_1220)"><g filter="url(#bl_david_1220)"><rect width="48" height="48" fill="#2c5cf6"/><rect x="6" y="0" width="11" height="48" fill="#4646b6"/>
<ellipse cx="40" cy="30" rx="5" ry="8" fill="#4a88ff"/>
<path d="M29 34L48 32V48H29z" fill="#1c1c1e"/>
<ellipse cx="23" cy="14" rx="7" ry="9.5" fill="#b89a7a"/>
<path d="M15 16C15 8 31 8 31 16L31 48H18L15 34z" fill="#d9937a"/>
<ellipse cx="23" cy="38" rx="6" ry="3" fill="#9a5a48"/></g></g>
<circle cx="24" cy="24" r="22.5" fill="none" stroke="#e6e9ee" stroke-width="1.6"/></svg>
<div class="t" style="left:2782.0px;top:1206.3px;font-size:23.9px;line-height:23.9px;color:#1f2536;-webkit-text-stroke:0.8px;">David Harry</div>
<div class="a" style="left:416px;top:1488px;width:3120px;height:2px;background:#e3e3e3;"></div>
<div class="a" style="left:416px;top:1384.5px;width:31px;height:31px;background:#fff;border:2px solid #e2e2e2;border-radius:7px;"></div>
<div class="a" style="left:480px;top:1344.5px;width:111px;height:111px;background:#fafafa;border:2px solid #e3e3e3;border-radius:9px;"></div>
<svg style="left:505.5px;top:1370px" width="60" height="60" viewBox="0 0 60 60"><circle cx="37.0" cy="23.3" r="9.5" fill="#7384a6"/><circle cx="20.5" cy="35.0" r="6.4" fill="#7384a6"/><circle cx="36.3" cy="41.5" r="3.9" fill="#7384a6"/></svg>
<div class="t" style="left:624.0px;top:1379.1px;font-size:28.0px;line-height:28.0px;color:#141414;-webkit-text-stroke:0.9px;">Anonymous App Users</div>
<div class="t" style="left:1343.0px;top:1386.4px;font-size:23.4px;line-height:23.4px;color:#262b38;text-align:center;width:400px;">Customer Segment</div>
<div class="t" style="left:1636px;top:1384px;width:400px;text-align:center;line-height:0"><span style="display:inline-block;background:#7d8799;color:#fff;border-radius:5px;font-size:18.5px;line-height:32px;height:32px;padding:0 8.5px;-webkit-text-stroke:0.4px #fff;">16</span></div>
<div class="a" style="left:2118px;top:1390px;width:16px;height:16px;background:#5ccf3f;border-radius:50%;"></div>
<div class="t" style="left:2151.0px;top:1386.6px;font-size:23.2px;line-height:23.2px;color:#1f2536;">Active</div>
<div class="t" style="left:2351.0px;top:1375.2px;font-size:22.6px;line-height:22.6px;color:#3d3d3d;-webkit-text-stroke:0.8px;">17 days</div>
<div class="t" style="left:2351px;top:1375.7px;font-size:22px;line-height:22px;visibility:hidden">17 days</div>
<div class="t" style="left:2439.7px;top:1376.0px;font-size:23.0px;line-height:23.0px;color:#7586a6;">ago</div>
<div class="t" style="left:2351.0px;top:1407.7px;font-size:19.9px;line-height:19.9px;color:#7586a6;">February 04, 2022</div>
<svg style="left:2718px;top:1376px" width="48" height="48" viewBox="0 0 48 48">
<defs><clipPath id="cp_david_1400"><circle cx="24" cy="24" r="22"/></clipPath><filter id="bl_david_1400"><feGaussianBlur stdDeviation="0.9"/></filter></defs>
<g clip-path="url(#cp_david_1400)"><g filter="url(#bl_david_1400)"><rect width="48" height="48" fill="#2c5cf6"/><rect x="6" y="0" width="11" height="48" fill="#4646b6"/>
<ellipse cx="40" cy="30" rx="5" ry="8" fill="#4a88ff"/>
<path d="M29 34L48 32V48H29z" fill="#1c1c1e"/>
<ellipse cx="23" cy="14" rx="7" ry="9.5" fill="#b89a7a"/>
<path d="M15 16C15 8 31 8 31 16L31 48H18L15 34z" fill="#d9937a"/>
<ellipse cx="23" cy="38" rx="6" ry="3" fill="#9a5a48"/></g></g>
<circle cx="24" cy="24" r="22.5" fill="none" stroke="#e6e9ee" stroke-width="1.6"/></svg>
<div class="t" style="left:2782.0px;top:1386.3px;font-size:23.9px;line-height:23.9px;color:#1f2536;-webkit-text-stroke:0.8px;">David Harry</div>
<div class="a" style="left:416px;top:1668px;width:3120px;height:2px;background:#e3e3e3;"></div>
<div class="a" style="left:416px;top:1564.5px;width:31px;height:31px;background:#fff;border:2px solid #e2e2e2;border-radius:7px;"></div>
<div class="a" style="left:464px;top:1524.5px;width:111px;height:111px;background:#fafafa;border:2px solid #e3e3e3;border-radius:9px;"></div>
<svg style="left:502.5px;top:1568px" width="34" height="24" viewBox="0 0 34 24">
<rect x="0.5" y="0.5" width="20" height="3.6" fill="#7384a6"/><rect x="0.5" y="7.2" width="20" height="3.6" fill="#7384a6"/>
<rect x="0.5" y="13.9" width="13.5" height="3.6" fill="#7384a6"/>
<rect x="16.5" y="12.6" width="16.5" height="3.6" fill="#7384a6"/><rect x="22.9" y="6.2" width="3.6" height="16.5" fill="#7384a6"/></svg>
<div class="t" style="left:608.0px;top:1542.0px;font-size:28.1px;line-height:28.1px;color:#141414;-webkit-text-stroke:0.9px;">New Mover Audience_ATL</div>
<div class="t" style="left:608.0px;top:1596.4px;font-size:23.5px;line-height:23.5px;color:#1a1a1a;">New Mover Audience from Market Pulse (Atlanta)</div>
<div class="t" style="left:1343.0px;top:1566.4px;font-size:23.4px;line-height:23.4px;color:#262b38;text-align:center;width:400px;">Prospect List</div>
<div class="t" style="left:1636px;top:1564px;width:400px;text-align:center;line-height:0"><span style="display:inline-block;background:#7d8799;color:#fff;border-radius:5px;font-size:18.5px;line-height:32px;height:32px;padding:0 8.5px;-webkit-text-stroke:0.4px #fff;">780,326</span></div>
<div class="a" style="left:2118px;top:1570px;width:16px;height:16px;background:#5ccf3f;border-radius:50%;"></div>
<div class="t" style="left:2151.0px;top:1566.6px;font-size:23.2px;line-height:23.2px;color:#1f2536;">Active</div>
<div class="t" style="left:2351.0px;top:1555.2px;font-size:22.6px;line-height:22.6px;color:#3d3d3d;-webkit-text-stroke:0.8px;">17 days</div>
<div class="t" style="left:2351px;top:1555.7px;font-size:22px;line-height:22px;visibility:hidden">17 days</div>
<div class="t" style="left:2439.7px;top:1556.0px;font-size:23.0px;line-height:23.0px;color:#7586a6;">ago</div>
<div class="t" style="left:2351.0px;top:1587.7px;font-size:19.9px;line-height:19.9px;color:#7586a6;">February 04, 2022</div>
<div class="t" style="left:2717.7px;top:1566.7px;font-size:23.4px;line-height:23.4px;color:#1f2536;-webkit-text-stroke:0.8px;">Susan&nbsp; Shimotsu</div>
<div class="a" style="left:416px;top:1848px;width:3120px;height:2px;background:#e3e3e3;"></div>
<div class="a" style="left:416px;top:1744.5px;width:31px;height:31px;background:#fff;border:2px solid #e2e2e2;border-radius:7px;"></div>
<div class="a" style="left:480px;top:1704.5px;width:111px;height:111px;background:#fafafa;border:2px solid #e3e3e3;border-radius:9px;"></div>
<svg style="left:505.5px;top:1730px" width="60" height="60" viewBox="0 0 60 60"><circle cx="37.0" cy="23.3" r="9.5" fill="#7384a6"/><circle cx="20.5" cy="35.0" r="6.4" fill="#7384a6"/><circle cx="36.3" cy="41.5" r="3.9" fill="#7384a6"/></svg>
<div class="t" style="left:624.0px;top:1739.5px;font-size:27.5px;line-height:27.5px;color:#141414;-webkit-text-stroke:0.9px;">SMS German Audience</div>
<div class="t" style="left:1343.0px;top:1746.4px;font-size:23.4px;line-height:23.4px;color:#262b38;text-align:center;width:400px;">Customer Segment</div>
<div class="t" style="left:1636px;top:1744px;width:400px;text-align:center;line-height:0"><span style="display:inline-block;background:#7d8799;color:#fff;border-radius:5px;font-size:18.5px;line-height:32px;height:32px;padding:0 8.5px;-webkit-text-stroke:0.4px #fff;">1</span></div>
<div class="a" style="left:2118px;top:1750px;width:16px;height:16px;background:#5ccf3f;border-radius:50%;"></div>
<div class="t" style="left:2151.0px;top:1746.6px;font-size:23.2px;line-height:23.2px;color:#1f2536;">Active</div>
<div class="t" style="left:2351.0px;top:1734.8px;font-size:23.0px;line-height:23.0px;color:#3d3d3d;-webkit-text-stroke:0.8px;">22 days</div>
<div class="t" style="left:2351px;top:1735.7px;font-size:22px;line-height:22px;visibility:hidden">22 days</div>
<div class="t" style="left:2440.2px;top:1736.0px;font-size:23.0px;line-height:23.0px;color:#7586a6;">ago</div>
<div class="t" style="left:2351.0px;top:1767.7px;font-size:19.8px;line-height:19.8px;color:#7586a6;">January 30, 2022</div>
<svg style="left:2718px;top:1736px" width="48" height="48" viewBox="0 0 48 48">
<defs><clipPath id="cp_daniel_1760"><circle cx="24" cy="24" r="22"/></clipPath><filter id="bl_daniel_1760"><feGaussianBlur stdDeviation="0.9"/></filter></defs>
<g clip-path="url(#cp_daniel_1760)"><g filter="url(#bl_daniel_1760)"><rect width="48" height="48" fill="#efebeb"/>
<ellipse cx="24" cy="27" rx="11.5" ry="17" fill="#d59a88"/>
<path d="M13 14C13 4 35 4 35 14L33 12C28 9 20 9 15 12z" fill="#3a3230"/>
<ellipse cx="24" cy="38" rx="6" ry="4" fill="#8a6a5a"/>
<rect x="14" y="46" width="20" height="4" fill="#e6b0a0"/></g></g>
<circle cx="24" cy="24" r="22.5" fill="none" stroke="#e6e9ee" stroke-width="1.6"/></svg>
<div class="t" style="left:2782.0px;top:1746.3px;font-size:23.8px;line-height:23.8px;color:#1f2536;-webkit-text-stroke:0.8px;">Daniel Eisenhut</div>
<div class="a" style="left:416px;top:2028px;width:3120px;height:2px;background:#e3e3e3;"></div>
<div class="a" style="left:416px;top:1924.5px;width:31px;height:31px;background:#fff;border:2px solid #e2e2e2;border-radius:7px;"></div>
<div class="a" style="left:480px;top:1884.5px;width:111px;height:111px;background:#fafafa;border:2px solid #e3e3e3;border-radius:9px;"></div>
<svg style="left:518.5px;top:1928px" width="34" height="24" viewBox="0 0 34 24">
<rect x="0.5" y="0.5" width="20" height="3.6" fill="#7384a6"/><rect x="0.5" y="7.2" width="20" height="3.6" fill="#7384a6"/>
<rect x="0.5" y="13.9" width="13.5" height="3.6" fill="#7384a6"/>
<rect x="16.5" y="12.6" width="16.5" height="3.6" fill="#7384a6"/><rect x="22.9" y="6.2" width="3.6" height="16.5" fill="#7384a6"/></svg>
<div class="t" style="left:624.0px;top:1918.8px;font-size:28.4px;line-height:28.4px;color:#141414;-webkit-text-stroke:0.9px;">Lookalike Acquisitions Audience</div>
<div class="t" style="left:1343.0px;top:1926.4px;font-size:23.4px;line-height:23.4px;color:#262b38;text-align:center;width:400px;">Lookalike</div>
<div class="t" style="left:1636px;top:1924px;width:400px;text-align:center;line-height:0"><span style="display:inline-block;background:#7d8799;color:#fff;border-radius:5px;font-size:18.5px;line-height:32px;height:32px;padding:0 8.5px;-webkit-text-stroke:0.4px #fff;">12,376,312</span></div>
<div class="a" style="left:2118px;top:1930px;width:16px;height:16px;background:#e4e4e4;border-radius:50%;"></div>
<div class="t" style="left:2151.0px;top:1926.6px;font-size:23.2px;line-height:23.2px;color:#1f2536;">Failed</div>
<div class="t" style="left:2351.0px;top:1914.0px;font-size:24.0px;line-height:24.0px;color:#3d3d3d;-webkit-text-stroke:0.8px;">a month</div>
<div class="t" style="left:2351px;top:1915.7px;font-size:22px;line-height:22px;visibility:hidden">a month</div>
<div class="t" style="left:2449.5px;top:1916.0px;font-size:23.0px;line-height:23.0px;color:#7586a6;">ago</div>
<div class="t" style="left:2351.0px;top:1947.7px;font-size:19.8px;line-height:19.8px;color:#7586a6;">January 26, 2022</div>
<svg style="left:2718px;top:1916px" width="48" height="48" viewBox="0 0 48 48">
<defs><clipPath id="cp_john_1940"><circle cx="24" cy="24" r="22"/></clipPath><filter id="bl_john_1940"><feGaussianBlur stdDeviation="0.9"/></filter></defs>
<g clip-path="url(#cp_john_1940)"><g filter="url(#bl_john_1940)"><rect width="48" height="48" fill="#f3f1f0"/>
<ellipse cx="24" cy="22" rx="10" ry="12" fill="#e9b9a8"/>
<path d="M14 14C14 6 34 6 34 14L32 13C28 10 20 10 16 13z" fill="#8a7870"/>
<rect x="0" y="30" width="48" height="18" fill="#fafafa"/></g></g>
<circle cx="24" cy="24" r="22.5" fill="none" stroke="#e6e9ee" stroke-width="1.6"/></svg>
<div class="t" style="left:2782.0px;top:1926.7px;font-size:23.4px;line-height:23.4px;color:#1f2536;-webkit-text-stroke:0.8px;">John B. Lewis</div>
<div class="a" style="left:416px;top:2104.5px;width:31px;height:31px;background:#fff;border:2px solid #e2e2e2;border-radius:7px;"></div>
<div class="a" style="left:480px;top:2064.5px;width:111px;height:111px;background:#fafafa;border:2px solid #e3e3e3;border-radius:9px;"></div>
<svg style="left:518.5px;top:2108px" width="34" height="24" viewBox="0 0 34 24">
<rect x="0.5" y="0.5" width="20" height="3.6" fill="#7384a6"/><rect x="0.5" y="7.2" width="20" height="3.6" fill="#7384a6"/>
<rect x="0.5" y="13.9" width="13.5" height="3.6" fill="#7384a6"/>
<rect x="16.5" y="12.6" width="16.5" height="3.6" fill="#7384a6"/><rect x="22.9" y="6.2" width="3.6" height="16.5" fill="#7384a6"/></svg>
</body></html>
